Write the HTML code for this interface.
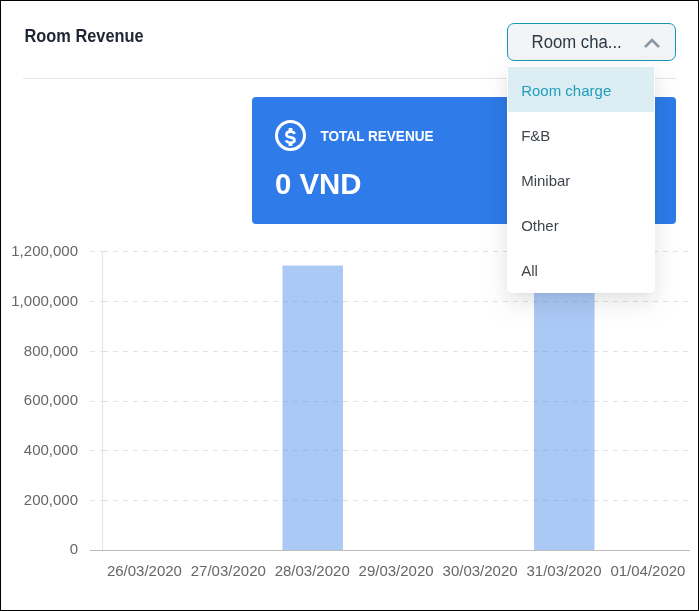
<!DOCTYPE html>
<html>
<head>
<meta charset="utf-8">
<style>
html,body{margin:0;padding:0;background:#fff;}
body{width:699px;height:611px;overflow:hidden;position:relative;font-family:"Liberation Sans",sans-serif;}
.frame{position:absolute;left:0;top:0;width:699px;height:611px;box-sizing:border-box;border:1px solid #000;}
svg{position:absolute;left:0;top:0;}
.menu{position:absolute;left:507px;top:66px;width:148px;height:226.5px;background:#fff;border-radius:5px;
  box-shadow:0 3.75px 7.5px -5px rgba(0,0,0,.1),0 7.5px 20px 0 rgba(0,0,0,.065),0 9px 28px 8px rgba(0,0,0,.045);}
.btn{position:absolute;left:507px;top:23px;width:169px;height:37.5px;box-sizing:border-box;border:1.5px solid #1597b5;border-radius:7px;background:#f3f4f6;}
.card{position:absolute;left:252px;top:97px;width:424px;height:127px;background:#2e7be9;border-radius:4px;}
</style>
</head>
<body>
<svg width="699" height="611" viewBox="0 0 699 611" style="font-family:'Liberation Sans',sans-serif;will-change:transform">
  <rect x="23" y="78" width="653" height="1" fill="#e6e6e6"/>
  <!-- gridlines -->
  <g stroke="#e1e1e1" stroke-width="1" stroke-dasharray="5 5">
    <line x1="90" y1="251.5" x2="102.5" y2="251.5"/><line x1="103" y1="251.5" x2="690" y2="251.5"/>
    <line x1="90" y1="301.5" x2="102.5" y2="301.5"/><line x1="103" y1="301.5" x2="690" y2="301.5"/>
    <line x1="90" y1="351.5" x2="102.5" y2="351.5"/><line x1="103" y1="351.5" x2="690" y2="351.5"/>
    <line x1="90" y1="401.5" x2="102.5" y2="401.5"/><line x1="103" y1="401.5" x2="690" y2="401.5"/>
    <line x1="90" y1="450.5" x2="102.5" y2="450.5"/><line x1="103" y1="450.5" x2="690" y2="450.5"/>
    <line x1="90" y1="500.5" x2="102.5" y2="500.5"/><line x1="103" y1="500.5" x2="690" y2="500.5"/>
  </g>
  <line x1="102.5" y1="251" x2="102.5" y2="550" stroke="#e4e4e4" stroke-width="1"/>
  <rect x="282.5" y="265.6" width="60.5" height="284.9" fill="rgb(87,147,236)" fill-opacity="0.5"/>
  <rect x="534" y="265.6" width="60.5" height="284.9" fill="rgb(87,147,236)" fill-opacity="0.5"/>
  <line x1="90" y1="550.5" x2="690" y2="550.5" stroke="#bdbdbd" stroke-width="1"/>
  <g font-size="15.5" fill="#666" text-anchor="end">
    <g transform="translate(78,256) scale(0.9677,1)"><text x="0" y="0">1,200,000</text></g>
    <g transform="translate(78,306) scale(0.9677,1)"><text x="0" y="0">1,000,000</text></g>
    <g transform="translate(78,356) scale(0.9677,1)"><text x="0" y="0">800,000</text></g>
    <g transform="translate(78,405) scale(0.9677,1)"><text x="0" y="0">600,000</text></g>
    <g transform="translate(78,455) scale(0.9677,1)"><text x="0" y="0">400,000</text></g>
    <g transform="translate(78,505) scale(0.9677,1)"><text x="0" y="0">200,000</text></g>
    <g transform="translate(78,554) scale(0.9677,1)"><text x="0" y="0">0</text></g>
  </g>
  <g font-size="15.5" fill="#666" text-anchor="middle">
    <g transform="translate(144.4,576) scale(0.9677,1)"><text x="0" y="0">26/03/2020</text></g>
    <g transform="translate(228.3,576) scale(0.9677,1)"><text x="0" y="0">27/03/2020</text></g>
    <g transform="translate(312.2,576) scale(0.9677,1)"><text x="0" y="0">28/03/2020</text></g>
    <g transform="translate(396.1,576) scale(0.9677,1)"><text x="0" y="0">29/03/2020</text></g>
    <g transform="translate(480.1,576) scale(0.9677,1)"><text x="0" y="0">30/03/2020</text></g>
    <g transform="translate(564.0,576) scale(0.9677,1)"><text x="0" y="0">31/03/2020</text></g>
    <g transform="translate(647.9,576) scale(0.9677,1)"><text x="0" y="0">01/04/2020</text></g>
  </g>
</svg>
<div class="card"></div>
<svg width="699" height="611" viewBox="0 0 699 611" style="font-family:'Liberation Sans',sans-serif">
  <g transform="translate(24.5,42) scale(0.93,1)"><text x="0" y="0" font-size="17.6" font-weight="bold" fill="#1e2633">Room Revenue</text></g>
  <circle cx="290.5" cy="135.5" r="14" fill="none" stroke="#fff" stroke-width="3"/>
  <path d="M294.6,133.9 C294.1,132.4 292.6,131.6 290.6,131.6 C288.2,131.6 286.4,132.8 286.4,134.7 C286.4,136.6 288.4,137 290.5,137.4 C292.8,137.8 294.6,138.5 294.6,140.3 C294.6,142 292.9,142.7 290.5,142.7 C288.1,142.7 286.6,141.8 286.1,140.4" fill="none" stroke="#fff" stroke-width="2.6"/>
  <path d="M290.5,128 V131.5 M290.5,142.5 V146" stroke="#fff" stroke-width="3.8"/>
  <g transform="translate(320.5,141) scale(0.93,1)"><text x="0" y="0" font-size="14.6" font-weight="bold" fill="#fff">TOTAL REVENUE</text></g>
  <text x="275" y="194" font-size="29.4" font-weight="bold" fill="#fff">0 VND</text>
</svg>
<div class="btn"></div>
<div class="menu"></div>
<svg width="699" height="611" viewBox="0 0 699 611" style="font-family:'Liberation Sans',sans-serif">
  <g transform="translate(531.6,48) scale(0.95,1)"><text x="0" y="0" font-size="17.6" fill="#2c3847">Room cha...</text></g>
  <polyline points="645,47 652,40 659,47" fill="none" stroke="#8a95a2" stroke-width="2.5"/>
  <rect x="508" y="67" width="146" height="45" fill="#dcedf3"/>
  <g font-size="15" fill="#40464d">
    <text x="521.2" y="96" fill="#1f9db9">Room charge</text>
    <text x="521.2" y="141">F&amp;B</text>
    <text x="521.2" y="186">Minibar</text>
    <text x="521.2" y="231">Other</text>
    <text x="521.2" y="276">All</text>
  </g>
</svg>
<div class="frame"></div>
</body>
</html>
